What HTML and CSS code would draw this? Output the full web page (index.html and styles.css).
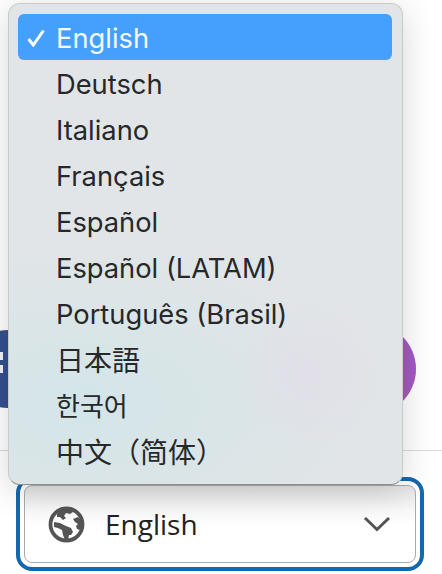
FILE: index.html
```html
<!DOCTYPE html>
<html lang="en">
<head>
<meta charset="utf-8">
<title>Language</title>
<link rel="stylesheet" href="styles.css">
</head>
<body>
<div class="page">
  <div class="spacer">
    <div class="blob blob-blue"><span class="blob-mark"></span><span class="blob-mark blob-mark-low"></span></div>
    <div class="blob blob-purple"></div>
  </div>
  <footer class="footer">
    <div class="ring">
      <div class="select">
        <svg class="globe" width="37" height="37" viewBox="0 0 37 37" aria-hidden="true">
          <circle cx="18.500" cy="18.500" r="16" fill="none" stroke="#555" stroke-width="3.800"/>
          <path fill="#555" d="M9 8l5-5 8-1 3 4-3 2-4-1-2 3 2 2-3 2-3-3-3 0zM6 16l6 1 6 3 5 2 2 4-2 3-2 0-1 5-3 0-2-5-1-5-4-2-4-1zM25 13l5-2 4 4 1 6-3 3-3-1-1-3 2-2-3-2z"/>
        </svg>
        <span class="select-label">English</span>
        <svg class="chevron" width="28" height="18" viewBox="0 0 28 18" aria-hidden="true">
          <path d="M2 3L14 14.500 26 3" fill="none" stroke="#555" stroke-width="3"/>
        </svg>
      </div>
    </div>
  </footer>
</div>
<ul class="menu">
  <li class="item item-on"><svg class="check" width="20" height="18" viewBox="0 0 20 18" aria-hidden="true"><path d="M2.500 10l4.800 6L17.500 1.500" fill="none" stroke="#fff" stroke-width="3"/></svg>English</li>
  <li class="item">Deutsch</li>
  <li class="item">Italiano</li>
  <li class="item">Français</li>
  <li class="item">Español</li>
  <li class="item">Español (LATAM)</li>
  <li class="item">Português (Brasil)</li>
  <li class="item" lang="ja">日本語</li>
  <li class="item" lang="ko">한국어</li>
  <li class="item" lang="zh">中文（简体）</li>
</ul>
</body>
</html>
```
FILE: styles.css
```css
* { box-sizing: border-box; }
html, body { margin: 0; height: 100%; background: #fff; overflow: hidden; }
.page { height: 574px; display: flex; flex-direction: column; }
.spacer { height: 450px; position: relative; }
.blob { position: absolute; border-radius: 50%; }
.blob-blue { left: -31px; top: 330px; width: 78px; height: 78px; background: #34508f; }
.blob-mark { position: absolute; left: 31px; top: 22px; width: 3px; height: 8px; background: #f2f4f8; }
.blob-mark-low { top: 35px; }
.blob-purple { left: 324px; top: 323px; width: 92px; height: 92px; background: #a459c4; }
.footer { border-top: 1px solid #dcdcdc; flex: 1; padding: 26px 18px 3px 16px; }
.ring { height: 94px; border: 4px solid #1468ad; border-radius: 16px; padding: 4px; background: #fff; }
.select { height: 78px; border: 1.500px solid #aaa; border-radius: 8px; display: flex; align-items: center; padding: 0 24px 0 23px; background: linear-gradient(#e4e4e4, #f8f8f8 24px, #fff 40px); }
.globe { flex: none; }
.select-label { margin-left: 20px; font: 28px/1 "Open Sans", sans-serif; color: #222; flex: 1; }
.chevron { flex: none; }
.menu { position: absolute; left: 8px; top: 3px; width: 395px; height: 482px; margin: 0; padding: 10px 10px 0 9px; list-style: none; border-radius: 12px; border: 1px solid #c9cbc9; border-bottom-color: #8f8f8f;
  background:
    radial-gradient(ellipse 75px 75px at 300px 370px, rgba(226,222,233,.8), rgba(226,222,233,0)),
    radial-gradient(ellipse 300px 170px at 80px 400px, rgb(211,229,232), rgba(211,229,232,0)),
    #e2e5e7;
  box-shadow: 0 6px 34px rgba(0,0,0,.16); }
.item { height: 46px; padding: 4px 0 0 38px; display: flex; align-items: center; position: relative; font: 27.300px/30px Inter, "Noto Sans CJK SC", sans-serif; color: #26282a; border-radius: 6px; }
.item:lang(ja) { font-family: Inter, "Noto Sans CJK JP", sans-serif; font-size: 28px; }
.item:lang(ko) { font-family: Inter, "Noto Sans CJK KR", sans-serif; font-size: 26px; }
.item:lang(zh) { font-size: 28px; text-spacing-trim: space-all; }
.item-on { background: #459ffd; color: #f4faff; }
.check { position: absolute; left: 8px; top: 15px; }
```
